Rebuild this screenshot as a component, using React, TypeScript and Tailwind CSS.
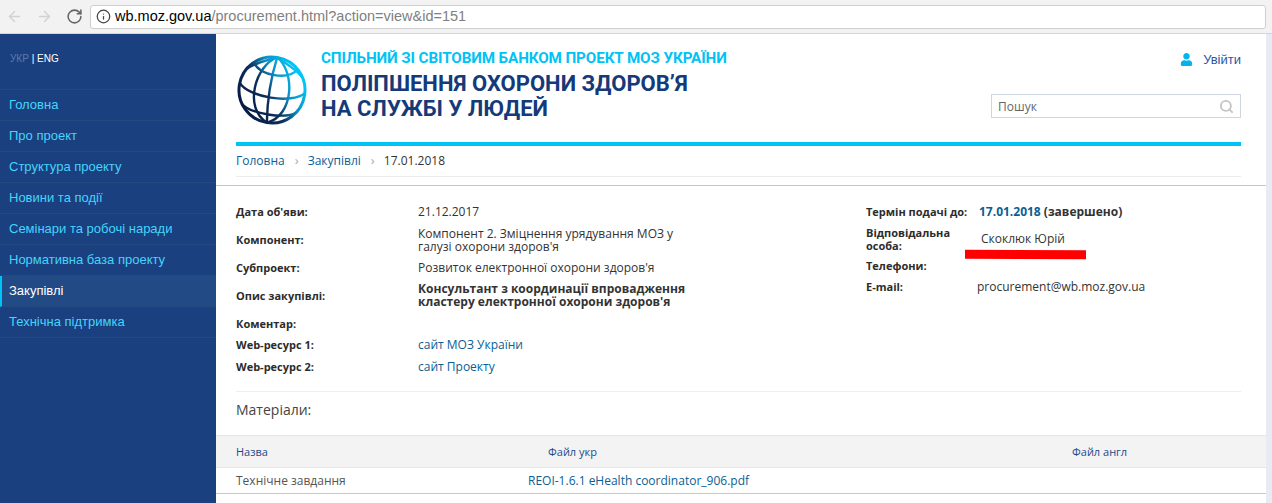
import { ArrowLeft, ArrowRight, Info, RotateCw, Search } from "lucide-react";
import { FaUser } from "react-icons/fa";

const menu = [
  "Головна",
  "Про проект",
  "Структура проекту",
  "Новини та події",
  "Семінари та робочі наради",
  "Нормативна база проекту",
  "Закупівлі",
  "Технічна підтримка",
];

function Logo() {
  return (
    <svg width="72" height="72" viewBox="0 0 72 72" fill="none" className="shrink-0">
      <defs>
        <linearGradient id="globe" x1="10" y1="58" x2="60" y2="16" gradientUnits="userSpaceOnUse">
          <stop offset="0" stopColor="#071a45" />
          <stop offset="0.42" stopColor="#0c2f5c" />
          <stop offset="0.68" stopColor="#0a8fc6" />
          <stop offset="1" stopColor="#00c6f7" />
        </linearGradient>
      </defs>
      <g stroke="url(#globe)" strokeWidth="2.4" transform="rotate(9 36 36)">
        <circle cx="36" cy="36" r="33" strokeWidth="3" />
        <path d="M36 3C16 14 10 58 36 69" />
        <path d="M36 3C56 14 62 58 36 69" />
        <path d="M36 3C33 24 33 48 36 69" />
        <path d="M36 3C26 8 14 12 8 19" />
        <path d="M36 3C46 8 58 12 64 19" />
        <path d="M14 12C22 24 50 24 58 12" />
        <path d="M3 34C14 47 58 47 69 34" />
        <path d="M8 54C18 63 54 63 64 54" />
      </g>
    </svg>
  );
}

function Label({ children }: { children: React.ReactNode }) {
  return <div className="font-bold text-[11px] text-[#2c2c2c] leading-[13px]">{children}</div>;
}

export default function App() {
  return (
    <div className="w-[1272px] h-[503px] overflow-hidden flex flex-col bg-white font-['Open_Sans',sans-serif] text-[12px] text-[#333]">
      {/* browser bar */}
      <div className="h-[34px] shrink-0 bg-[#f2f2f2] border-b border-[#d6d6d6] flex items-center gap-[13px] pl-[6px] pr-[6px]">
        <ArrowLeft size={17} strokeWidth={2} className="text-[#d2d2d2]" />
        <ArrowRight size={17} strokeWidth={2} className="text-[#d2d2d2]" />
        <RotateCw size={17} strokeWidth={2.2} className="text-[#666]" />
        <div className="flex-1 h-[24px] -ml-[6px] bg-white border border-[#cfcfcf] rounded-[3px] flex items-center pl-[5px] gap-[4px] font-['Liberation_Sans',sans-serif] text-[14.5px]">
          <Info size={15} strokeWidth={2} className="text-[#444]" />
          <span>
            <span className="text-black">wb.moz.gov.ua</span>
            <span className="text-[#7f7f7f]">/procurement.html?action=view&amp;id=151</span>
          </span>
        </div>
      </div>

      <div className="flex flex-1 min-h-0">
        {/* sidebar */}
        <aside className="w-[216px] shrink-0 bg-[#1a4080] font-['Liberation_Sans',sans-serif] text-[13px]">
          <div className="h-[55px] pl-[10px] pt-[18px] text-[10px] leading-[14px] text-white">
            <span className="text-[#5f7ba8]">УКР</span> | ENG
          </div>
          <ul className="border-t border-[#24497f]">
            {menu.map((item) => (
              <li
                key={item}
                className={
                  item === "Закупівлі"
                    ? "h-[31px] pl-[7px] border-l-2 border-l-[#00c3f5] border-b border-b-[#24497f] bg-[#224a85] text-white flex items-center"
                    : "h-[31px] pl-[9px] border-b border-[#24497f] text-[#45d4fa] flex items-center"
                }
              >
                {item}
              </li>
            ))}
          </ul>
        </aside>

        {/* main */}
        <main className="w-[1050px] shrink-0 flex flex-col">
          <div className="px-[20px] pr-[25px]">
            <header className="h-[108px] flex">
              <div className="pt-[20px]">
                <Logo />
              </div>
              <div className="ml-[13px] pt-[15px] font-['Roboto',sans-serif] font-bold">
                <div className="text-[#00c3f5] text-[15.2px] leading-[19px] tracking-[-0.1px]">
                  СПІЛЬНИЙ ЗІ СВІТОВИМ БАНКОМ ПРОЕКТ МОЗ УКРАЇНИ
                </div>
                <div className="mt-[3px] text-[#143a7a] text-[22px] leading-[25px]">
                  ПОЛІПШЕННЯ ОХОРОНИ ЗДОРОВ’Я
                  <br />
                  НА СЛУЖБІ У ЛЮДЕЙ
                </div>
              </div>
              <div className="ml-auto flex flex-col items-end">
                <div className="mt-[17px] h-[17px] flex items-center gap-[10px] font-['Liberation_Sans',sans-serif] text-[13px] text-[#2c56a0]">
                  <FaUser size={13} className="text-[#00b4ee]" />
                  Увійти
                </div>
                <div className="mt-[26px] w-[250px] h-[24px] border border-[#cfd6e2] flex items-center justify-between pl-[6px] pr-[6px] pt-[1px] text-[#666]">
                  Пошук
                  <Search size={15} strokeWidth={3} className="text-[#c4c4c4]" />
                </div>
              </div>
            </header>
            <div className="h-[4px] bg-[#00c3f5]" />
            <div className="h-[31px] border-b border-[#ececec] flex items-center gap-[10px] text-[12px]">
              <span className="text-[#0b5e94]">Головна</span>
              <span className="w-[3px] text-[#aaa] text-[13px]">›</span>
              <span className="text-[#0b5e94]">Закупівлі</span>
              <span className="w-[3px] text-[#aaa] text-[13px]">›</span>
              <span>17.01.2018</span>
            </div>
          </div>

          <div className="mt-[8px] border-t border-[#a7cfdc]" />

          <div className="mx-[20px] mr-[25px] h-[206px] border-b border-[#eeeeee] flex">
            <div className="w-[630px] shrink-0 pt-[19px]">
              <div className="grid grid-cols-[182px_1fr] items-center">
                <div className="h-[13px] flex items-center"><Label>Дата об'яви:</Label></div>
                <div className="leading-[13px]">21.12.2017</div>
                <div className="mt-[8px]"><Label>Компонент:</Label></div>
                <div className="mt-[9px] leading-[13px] w-[280px]">
                  Компонент 2. Зміцнення урядування МОЗ у галузі охорони здоров'я
                </div>
                <div className="mt-[8px]"><Label>Субпроект:</Label></div>
                <div className="mt-[8px] leading-[13px]">Розвиток електронної охорони здоров'я</div>
                <div className="mt-[8px]"><Label>Опис закупівлі:</Label></div>
                <div className="mt-[8px] leading-[13px] font-bold w-[300px]">
                  Консультант з координації впровадження кластеру електронної охорони здоров'я
                </div>
                <div className="mt-[9px]"><Label>Коментар:</Label></div>
                <div className="mt-[9px] h-[13px]" />
                <div className="mt-[8px]"><Label>Web-ресурс 1:</Label></div>
                <div className="mt-[8px] leading-[13px] text-[#0b5e94]">сайт МОЗ України</div>
                <div className="mt-[9px]"><Label>Web-ресурс 2:</Label></div>
                <div className="mt-[9px] leading-[13px] text-[#0b5e94]">сайт Проекту</div>
              </div>
            </div>
            <div className="pt-[19px]">
              <div className="grid grid-cols-[113px_1fr] items-center">
                <Label>Термін подачі до:</Label>
                <div className="leading-[13px] font-bold">
                  <span className="text-[#0b5e94]">17.01.2018</span> (завершено)
                </div>
                <div className="mt-[8px] w-[70px]"><Label>Відповідальна особа:</Label></div>
                <div className="relative mt-[8px] pl-[2px] pb-[2px] leading-[13px]">
                  Скоклюк Юрій
                  <div className="absolute left-[-14px] top-[18px] w-[121px] h-[9px] bg-[#fe0000] rotate-[0.3deg]" />
                </div>
                <div className="mt-[7px]"><Label>Телефони:</Label></div>
                <div className="mt-[7px] h-[13px]" />
                <div className="mt-[8px]"><Label>E-mail:</Label></div>
                <div className="mt-[8px] -ml-[2px] leading-[13px]">procurement@wb.moz.gov.ua</div>
              </div>
            </div>
          </div>

          <div className="h-[43px] pl-[20px] pt-[8px] text-[14px] leading-[19px] text-[#444]">Матеріали:</div>

          <div className="h-[33px] bg-[#f3f3f3] border-y border-[#e6e6e6] grid grid-cols-[312px_524px_1fr] items-center pl-[20px] pt-[1px] text-[11px] text-[#1e4a8c]">
            <span>Назва</span>
            <span>Файл укр</span>
            <span>Файл англ</span>
          </div>
          <div className="h-[26px] border-b border-[#a7d6de] grid grid-cols-[292px_1fr] items-center pl-[20px] text-[#555]">
            <span>Технічне завдання</span>
            <span className="text-[#0b5e94]">REOI-1.6.1 eHealth coordinator_906.pdf</span>
          </div>
        </main>
        <div className="flex-1 bg-[#e8ebf3]" />
      </div>
    </div>
  );
}
